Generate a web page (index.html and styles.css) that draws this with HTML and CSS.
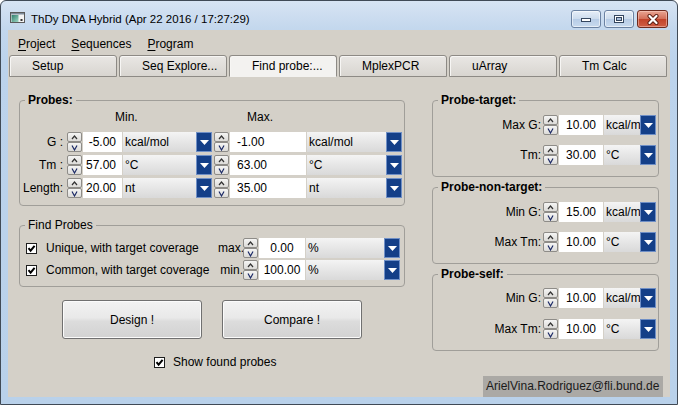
FILE: index.html
```html
<!DOCTYPE html>
<html>
<head>
<meta charset="utf-8">
<link rel="stylesheet" href="styles.css">
</head>
<body>
<div class="window">
  <div class="titlebar">
    <svg class="app-icon" width="15" height="11" viewBox="0 0 15 11">
      <defs><linearGradient id="ig" x1="0" y1="0" x2="1" y2="1"><stop offset="0" stop-color="#2f7c6c"/><stop offset="1" stop-color="#9fd8c4"/></linearGradient></defs>
      <rect x="0.5" y="0.5" width="14" height="10" fill="#f4f4f4" stroke="#5a5a5a"/>
      <rect x="1" y="1" width="13" height="1.5" fill="#7c8a9a"/>
      <rect x="1.5" y="3" width="7" height="7" fill="url(#ig)"/>
      <rect x="10.5" y="7" width="2" height="2" fill="#333"/>
    </svg>
    <span class="title">ThDy DNA Hybrid (Apr 22 2016 / 17:27:29)</span>
    <div class="controls">
      <span class="wbtn"><svg width="12" height="8" viewBox="0 0 12 8"><rect x="1.5" y="3.5" width="9" height="3" fill="#fff" stroke="#34465f"/></svg></span>
      <span class="wbtn"><svg width="12" height="10" viewBox="0 0 12 10"><rect x="1.5" y="1.5" width="9" height="7" fill="#fff" stroke="#34465f"/><rect x="3.5" y="3.5" width="5" height="3" fill="#a9bfdc" stroke="#34465f"/></svg></span>
      <span class="wbtn close"><svg width="14" height="11" viewBox="0 0 14 11"><path d="M3.5 2 L10.5 9 M10.5 2 L3.5 9" stroke="#5a1d12" stroke-width="4" stroke-linecap="round"/><path d="M3.5 2 L10.5 9 M10.5 2 L3.5 9" stroke="#fff" stroke-width="2.2" stroke-linecap="round"/></svg></span>
    </div>
  </div>

  <div class="client">
    <div class="menubar">
      <span><u>P</u>roject</span>
      <span><u>S</u>equences</span>
      <span><u>P</u>rogram</span>
    </div>
    <div class="tabs">
      <div class="tab">Setup</div>
      <div class="tab">Seq Explore...</div>
      <div class="tab active">Find probe:...</div>
      <div class="tab">MplexPCR</div>
      <div class="tab">uArray</div>
      <div class="tab">Tm Calc</div>
    </div>

    <div class="content">
      <div class="leftcol">
        <div class="group">
          <div class="gtitle bold">Probes:</div>
          <div class="pgrid">
            <div class="hdr hmin">Min.</div>
            <div class="hdr hmax">Max.</div>

            <div class="lbl">G :</div>
            <div class="spin"><span><svg width="9" height="7" viewBox="0 0 9 7"><path d="M2 5 L4.5 2 L7 5" fill="none" stroke="#333" stroke-width="1.2"/></svg></span><span><svg width="9" height="7" viewBox="0 0 9 7"><path d="M2 1.5 L4.5 6 L7 1.5" fill="none" stroke="#1c2a66" stroke-width="1.2"/></svg></span></div>
            <div class="num r">-5.00</div>
            <div class="combo"><span class="txt">kcal/mol</span><span class="dd"><svg width="9" height="5" viewBox="0 0 9 5"><polygon points="0,0 9,0 4.5,5" fill="#fff"/></svg></span></div>
            <div></div>
            <div class="spin"><span><svg width="9" height="7" viewBox="0 0 9 7"><path d="M2 5 L4.5 2 L7 5" fill="none" stroke="#333" stroke-width="1.2"/></svg></span><span><svg width="9" height="7" viewBox="0 0 9 7"><path d="M2 1.5 L4.5 6 L7 1.5" fill="none" stroke="#1c2a66" stroke-width="1.2"/></svg></span></div>
            <div class="num l">-1.00</div>
            <div class="combo"><span class="txt">kcal/mol</span><span class="dd"><svg width="9" height="5" viewBox="0 0 9 5"><polygon points="0,0 9,0 4.5,5" fill="#fff"/></svg></span></div>

            <div class="lbl">Tm :</div>
            <div class="spin"><span><svg width="9" height="7" viewBox="0 0 9 7"><path d="M2 5 L4.5 2 L7 5" fill="none" stroke="#333" stroke-width="1.2"/></svg></span><span><svg width="9" height="7" viewBox="0 0 9 7"><path d="M2 1.5 L4.5 6 L7 1.5" fill="none" stroke="#1c2a66" stroke-width="1.2"/></svg></span></div>
            <div class="num r">57.00</div>
            <div class="combo"><span class="txt">°C</span><span class="dd"><svg width="9" height="5" viewBox="0 0 9 5"><polygon points="0,0 9,0 4.5,5" fill="#fff"/></svg></span></div>
            <div></div>
            <div class="spin"><span><svg width="9" height="7" viewBox="0 0 9 7"><path d="M2 5 L4.5 2 L7 5" fill="none" stroke="#333" stroke-width="1.2"/></svg></span><span><svg width="9" height="7" viewBox="0 0 9 7"><path d="M2 1.5 L4.5 6 L7 1.5" fill="none" stroke="#1c2a66" stroke-width="1.2"/></svg></span></div>
            <div class="num l">63.00</div>
            <div class="combo"><span class="txt">°C</span><span class="dd"><svg width="9" height="5" viewBox="0 0 9 5"><polygon points="0,0 9,0 4.5,5" fill="#fff"/></svg></span></div>

            <div class="lbl">Length:</div>
            <div class="spin"><span><svg width="9" height="7" viewBox="0 0 9 7"><path d="M2 5 L4.5 2 L7 5" fill="none" stroke="#333" stroke-width="1.2"/></svg></span><span><svg width="9" height="7" viewBox="0 0 9 7"><path d="M2 1.5 L4.5 6 L7 1.5" fill="none" stroke="#1c2a66" stroke-width="1.2"/></svg></span></div>
            <div class="num r">20.00</div>
            <div class="combo"><span class="txt">nt</span><span class="dd"><svg width="9" height="5" viewBox="0 0 9 5"><polygon points="0,0 9,0 4.5,5" fill="#fff"/></svg></span></div>
            <div></div>
            <div class="spin"><span><svg width="9" height="7" viewBox="0 0 9 7"><path d="M2 5 L4.5 2 L7 5" fill="none" stroke="#333" stroke-width="1.2"/></svg></span><span><svg width="9" height="7" viewBox="0 0 9 7"><path d="M2 1.5 L4.5 6 L7 1.5" fill="none" stroke="#1c2a66" stroke-width="1.2"/></svg></span></div>
            <div class="num l">35.00</div>
            <div class="combo"><span class="txt">nt</span><span class="dd"><svg width="9" height="5" viewBox="0 0 9 5"><polygon points="0,0 9,0 4.5,5" fill="#fff"/></svg></span></div>
          </div>
        </div>

        <div class="group find">
          <div class="gtitle">Find Probes</div>
          <div class="fgrid">
            <div class="chk"><svg width="11" height="11" viewBox="0 0 11 11"><rect x="0.5" y="0.5" width="10" height="10" fill="#fff" stroke="#1e1e1e"/><path d="M2.5 5.2 L4.6 7.6 L8.6 2.8" fill="none" stroke="#000" stroke-width="2"/></svg><span>Unique, with target coverage</span></div>
            <div class="slbl">max.</div>
            <div class="spin"><span><svg width="9" height="7" viewBox="0 0 9 7"><path d="M2 5 L4.5 2 L7 5" fill="none" stroke="#333" stroke-width="1.2"/></svg></span><span><svg width="9" height="7" viewBox="0 0 9 7"><path d="M2 1.5 L4.5 6 L7 1.5" fill="none" stroke="#1c2a66" stroke-width="1.2"/></svg></span></div>
            <div class="num c">0.00</div>
            <div class="combo"><span class="txt">%</span><span class="dd"><svg width="9" height="5" viewBox="0 0 9 5"><polygon points="0,0 9,0 4.5,5" fill="#fff"/></svg></span></div>

            <div class="chk"><svg width="11" height="11" viewBox="0 0 11 11"><rect x="0.5" y="0.5" width="10" height="10" fill="#fff" stroke="#1e1e1e"/><path d="M2.5 5.2 L4.6 7.6 L8.6 2.8" fill="none" stroke="#000" stroke-width="2"/></svg><span>Common, with target coverage</span></div>
            <div class="slbl">min.</div>
            <div class="spin"><span><svg width="9" height="7" viewBox="0 0 9 7"><path d="M2 5 L4.5 2 L7 5" fill="none" stroke="#333" stroke-width="1.2"/></svg></span><span><svg width="9" height="7" viewBox="0 0 9 7"><path d="M2 1.5 L4.5 6 L7 1.5" fill="none" stroke="#1c2a66" stroke-width="1.2"/></svg></span></div>
            <div class="num c">100.00</div>
            <div class="combo"><span class="txt">%</span><span class="dd"><svg width="9" height="5" viewBox="0 0 9 5"><polygon points="0,0 9,0 4.5,5" fill="#fff"/></svg></span></div>
          </div>
        </div>

        <div class="btnrow">
          <div class="btn">Design !</div>
          <div class="btn">Compare !</div>
        </div>

        <div class="showrow">
          <svg width="11" height="11" viewBox="0 0 11 11"><rect x="0.5" y="0.5" width="10" height="10" fill="#fff" stroke="#1e1e1e"/><path d="M2.5 5.2 L4.6 7.6 L8.6 2.8" fill="none" stroke="#000" stroke-width="2"/></svg>
          <span>Show found probes</span>
        </div>
      </div>

      <div class="rightcol">
        <div class="group rgroup">
          <div class="gtitle bold">Probe-target:</div>
          <div class="rgrid">
            <div class="lbl">Max G:</div>
            <div class="spin"><span><svg width="9" height="7" viewBox="0 0 9 7"><path d="M2 5 L4.5 2 L7 5" fill="none" stroke="#333" stroke-width="1.2"/></svg></span><span><svg width="9" height="7" viewBox="0 0 9 7"><path d="M2 1.5 L4.5 6 L7 1.5" fill="none" stroke="#1c2a66" stroke-width="1.2"/></svg></span></div>
            <div class="num c">10.00</div>
            <div class="combo"><span class="txt">kcal/mol</span><span class="dd"><svg width="9" height="5" viewBox="0 0 9 5"><polygon points="0,0 9,0 4.5,5" fill="#fff"/></svg></span></div>

            <div class="lbl">Tm:</div>
            <div class="spin"><span><svg width="9" height="7" viewBox="0 0 9 7"><path d="M2 5 L4.5 2 L7 5" fill="none" stroke="#333" stroke-width="1.2"/></svg></span><span><svg width="9" height="7" viewBox="0 0 9 7"><path d="M2 1.5 L4.5 6 L7 1.5" fill="none" stroke="#1c2a66" stroke-width="1.2"/></svg></span></div>
            <div class="num c">30.00</div>
            <div class="combo"><span class="txt">°C</span><span class="dd"><svg width="9" height="5" viewBox="0 0 9 5"><polygon points="0,0 9,0 4.5,5" fill="#fff"/></svg></span></div>
          </div>
        </div>

        <div class="group rgroup">
          <div class="gtitle bold">Probe-non-target:</div>
          <div class="rgrid">
            <div class="lbl">Min G:</div>
            <div class="spin"><span><svg width="9" height="7" viewBox="0 0 9 7"><path d="M2 5 L4.5 2 L7 5" fill="none" stroke="#333" stroke-width="1.2"/></svg></span><span><svg width="9" height="7" viewBox="0 0 9 7"><path d="M2 1.5 L4.5 6 L7 1.5" fill="none" stroke="#1c2a66" stroke-width="1.2"/></svg></span></div>
            <div class="num c">15.00</div>
            <div class="combo"><span class="txt">kcal/mol</span><span class="dd"><svg width="9" height="5" viewBox="0 0 9 5"><polygon points="0,0 9,0 4.5,5" fill="#fff"/></svg></span></div>

            <div class="lbl">Max Tm:</div>
            <div class="spin"><span><svg width="9" height="7" viewBox="0 0 9 7"><path d="M2 5 L4.5 2 L7 5" fill="none" stroke="#333" stroke-width="1.2"/></svg></span><span><svg width="9" height="7" viewBox="0 0 9 7"><path d="M2 1.5 L4.5 6 L7 1.5" fill="none" stroke="#1c2a66" stroke-width="1.2"/></svg></span></div>
            <div class="num c">10.00</div>
            <div class="combo"><span class="txt">°C</span><span class="dd"><svg width="9" height="5" viewBox="0 0 9 5"><polygon points="0,0 9,0 4.5,5" fill="#fff"/></svg></span></div>
          </div>
        </div>

        <div class="group rgroup self">
          <div class="gtitle bold">Probe-self:</div>
          <div class="rgrid">
            <div class="lbl">Min G:</div>
            <div class="spin"><span><svg width="9" height="7" viewBox="0 0 9 7"><path d="M2 5 L4.5 2 L7 5" fill="none" stroke="#333" stroke-width="1.2"/></svg></span><span><svg width="9" height="7" viewBox="0 0 9 7"><path d="M2 1.5 L4.5 6 L7 1.5" fill="none" stroke="#1c2a66" stroke-width="1.2"/></svg></span></div>
            <div class="num c">10.00</div>
            <div class="combo"><span class="txt">kcal/mol</span><span class="dd"><svg width="9" height="5" viewBox="0 0 9 5"><polygon points="0,0 9,0 4.5,5" fill="#fff"/></svg></span></div>

            <div class="lbl">Max Tm:</div>
            <div class="spin"><span><svg width="9" height="7" viewBox="0 0 9 7"><path d="M2 5 L4.5 2 L7 5" fill="none" stroke="#333" stroke-width="1.2"/></svg></span><span><svg width="9" height="7" viewBox="0 0 9 7"><path d="M2 1.5 L4.5 6 L7 1.5" fill="none" stroke="#1c2a66" stroke-width="1.2"/></svg></span></div>
            <div class="num c">10.00</div>
            <div class="combo"><span class="txt">°C</span><span class="dd"><svg width="9" height="5" viewBox="0 0 9 5"><polygon points="0,0 9,0 4.5,5" fill="#fff"/></svg></span></div>
          </div>
        </div>

        <div class="email">ArielVina.Rodriguez@fli.bund.de</div>
      </div>
    </div>
  </div>
</div>
</body>
</html>
```

FILE: styles.css
```css
* { box-sizing: border-box; }
html, body { margin: 0; padding: 0; background: #ffffff; }
body {
  font-family: "Liberation Sans", Arial, sans-serif;
  font-size: 12px;
  color: #000;
}

.window {
  width: 678px;
  height: 405px;
  border: 1px solid #404a56;
  border-radius: 6px 6px 0 0;
  background: linear-gradient(#d7e4f3, #c3d7ed 28px, #bcd3ec 60px, #b9d1ea);
  display: flex;
  flex-direction: column;
  overflow: hidden;
}

.titlebar {
  flex: none;
  height: 29px;
  display: flex;
  align-items: flex-start;
  padding-left: 9px;
}
.app-icon { margin-top: 11px; flex: none; }
.title {
  margin-top: 10px;
  margin-left: 6px;
  line-height: 16px;
  font-size: 11.5px;
  color: #000;
}
.controls {
  margin-left: auto;
  margin-right: 9px;
  margin-top: 9px;
  display: flex;
  gap: 3px;
}
.wbtn {
  width: 30px;
  height: 18px;
  border: 1px solid #6b82a2;
  border-radius: 3px;
  background: linear-gradient(#e6eef8, #cddced 48%, #b7cce6 52%, #c8daee);
  box-shadow: inset 0 0 0 1px rgba(255,255,255,0.55);
  display: flex;
  align-items: center;
  justify-content: center;
}
.wbtn.close {
  width: 31px;
  border-color: #6e2a1e;
  background: linear-gradient(#e9a593, #d4705a 48%, #c2432a 52%, #cf5e45);
  box-shadow: inset 0 0 0 1px rgba(255,220,210,0.45);
}

.client {
  flex: none;
  margin: 0 7px;
  height: 367px;
  background: #d4d0c8;
  display: flex;
  flex-direction: column;
}

.menubar {
  flex: none;
  height: 25px;
  padding: 4px 0 0 10px;
  display: flex;
  gap: 16px;
  line-height: 20px;
}
.menubar u { text-decoration-thickness: 1px; text-underline-offset: 2px; }

.tabs {
  flex: none;
  height: 22px;
  display: flex;
  gap: 2px;
  padding-left: 1px;
}
.tab {
  width: 108px;
  height: 22px;
  border: 1px solid #8d8a85;
  border-radius: 3px 3px 0 0;
  background: linear-gradient(#e9e7e4, #d8d5d0);
  box-shadow: inset 1px 1px 0 #f7f6f4;
  padding-left: 22px;
  line-height: 21px;
  white-space: nowrap;
}
.tab.active {
  background: #f3f2f0;
  border-bottom-color: #f3f2f0;
}

.content {
  flex: 1;
  display: flex;
  padding: 23px 0 0 11px;
}
.leftcol {
  width: 386px;
  flex: none;
  display: flex;
  flex-direction: column;
}
.rightcol {
  width: 231px;
  flex: none;
  margin-left: 27px;
  display: flex;
  flex-direction: column;
}

.group {
  border: 1px solid #a09e99;
  border-radius: 4px;
}
.gtitle {
  margin: -8px 0 0 5px;
  padding: 0 3px;
  line-height: 15px;
  background: #d4d0c8;
  width: max-content;
}
.bold { font-weight: bold; }

.pgrid {
  display: grid;
  grid-template-columns: 47px 16px 40px 89px 2px 16px 77px 95px;
  grid-template-rows: 19px 20px 20px 20px;
  row-gap: 3px;
  padding: 2px 0 7px 0;
}
.hdr { line-height: 15px; }
.hmin { grid-column: 2 / 5; padding-left: 48px; }
.hmax { grid-column: 6 / 9; padding-left: 33px; }

.lbl {
  text-align: right;
  padding-right: 4px;
  line-height: 20px;
  white-space: nowrap;
}

.spin {
  width: 15px;
  height: 20px;
  display: flex;
  flex-direction: column;
}
.spin span {
  flex: 1;
  border: 1px solid #8e8c88;
  border-radius: 2px;
  background: linear-gradient(#f5f5f4, #dcdbd8);
  display: flex;
  align-items: center;
  justify-content: center;
}

.num {
  background: #fff;
  margin-right: 1px;
  line-height: 20px;
  white-space: nowrap;
  overflow: hidden;
}
.num.r { text-align: right; padding-right: 6px; }
.num.l { text-align: left; padding-left: 7px; }
.num.c { text-align: center; }

.combo {
  display: flex;
  height: 20px;
  background: linear-gradient(#f4f4f4, #e6e6e6 50%, #d9d9d9);
  line-height: 20px;
  overflow: hidden;
}
.combo .txt {
  flex: 1;
  min-width: 0;
  padding-left: 2px;
  overflow: hidden;
  white-space: nowrap;
}
.dd {
  flex: none;
  width: 16px;
  height: 20px;
  background: #143f88;
  box-shadow: inset 0 0 0 1px #6f8fc6;
  display: flex;
  align-items: center;
  justify-content: center;
  padding-top: 1px;
}

.find { margin-top: 19px; }
.fgrid {
  display: grid;
  grid-template-columns: 198px 25px 16px 47px 94px;
  grid-auto-rows: 20px;
  row-gap: 2px;
  padding: 5px 0 6px 0;
}
.chk {
  display: flex;
  align-items: center;
  gap: 9px;
  padding-left: 6px;
  white-space: nowrap;
}
.chk svg, .showrow svg { flex: none; }
.slbl { text-align: right; line-height: 20px; }

.btnrow {
  display: flex;
  gap: 20px;
  padding-left: 43px;
  margin-top: 13px;
}
.btn {
  width: 140px;
  height: 39px;
  border: 1px solid #707070;
  border-radius: 3px;
  background: linear-gradient(#f2f2f2, #e9e9e9 45%, #dcdcdc 55%, #d2d2d2);
  box-shadow: inset 0 0 0 1px #fbfbfb;
  display: flex;
  align-items: center;
  justify-content: center;
}

.showrow {
  display: flex;
  align-items: center;
  gap: 8px;
  padding-left: 135px;
  margin-top: 16px;
  line-height: 14px;
}

.rgroup { width: 227px; }
.rgroup + .rgroup { margin-top: 10px; }
.rgrid {
  display: grid;
  grid-template-columns: 110px 16px 45px 52px;
  grid-auto-rows: 20px;
  row-gap: 10px;
  padding: 7px 0 11px 0;
}
.rgrid .lbl { padding-right: 2px; }
.self .rgrid { row-gap: 11px; padding-top: 6px; }

.email {
  margin-top: auto;
  align-self: flex-end;
  width: 180px;
  height: 21px;
  background: #aba9a5;
  padding-left: 3px;
  line-height: 21px;
  white-space: nowrap;
  color: #1a1a1a;
}
```
